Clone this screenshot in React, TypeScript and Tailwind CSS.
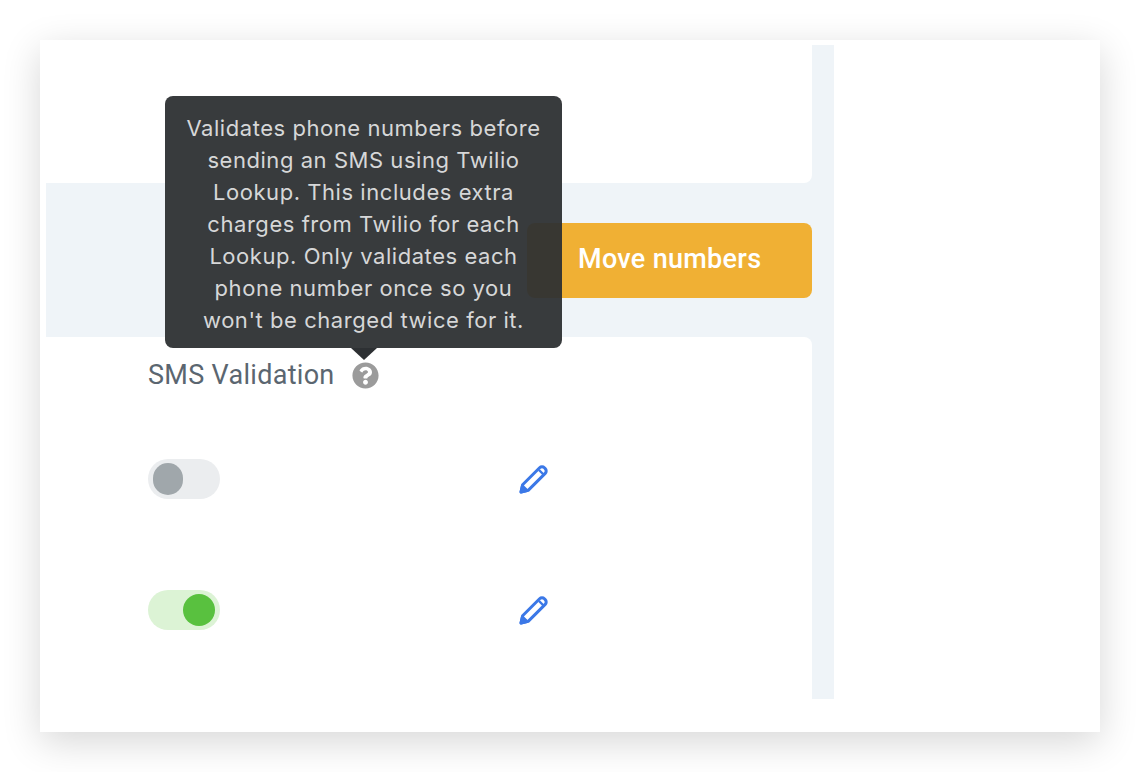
import { FaQuestionCircle } from 'react-icons/fa';

const tooltipLines = [
    'Validates phone numbers before',
    'sending an SMS using Twilio',
    'Lookup. This includes extra',
    'charges from Twilio for each',
    'Lookup. Only validates each',
    'phone number once so you',
    "won't be charged twice for it.",
];

function PencilIcon() {
    return (
        <svg width="30" height="30" viewBox="0 0 30 30" fill="none" stroke="#3b78e7" strokeWidth="3" strokeLinejoin="round">
            <path d="M2 28l1.6-7.2L20.6 3.8a3.4 3.4 0 0 1 4.8 0l.8.8a3.4 3.4 0 0 1 0 4.8L9.2 26.4z" />
            <path d="M20 6l4.5 4.5" strokeWidth="2.4" />
            <path d="M2 28l1.4-6 4.6 4.6z" fill="#3b78e7" />
        </svg>
    );
}

function Toggle({ on }: { on: boolean }) {
    return (
        <div className={on ? 'w-[72px] h-10 rounded-full bg-[#dcf3d5] flex items-center justify-end pr-[5px]' : 'w-[72px] h-10 rounded-full bg-[#ebedef] flex items-center pl-[5px]'}>
            <div className={on ? 'w-8 h-8 rounded-full bg-[#59c13f]' : 'w-[30px] h-8 rounded-full bg-[#a0a7ab]'} />
        </div>
    );
}

function Row({ on }: { on: boolean }) {
    return (
        <div className="h-[131px] flex items-start">
            <div className="w-[371px]">
                <Toggle on={on} />
            </div>
            <div className="pt-[5px]">
                <PencilIcon />
            </div>
        </div>
    );
}

export default function App() {
    return (
        <div className="h-[772px] overflow-hidden bg-white pt-10 px-10 font-['Roboto',sans-serif]">
            <div className="w-[1060px] h-[692px] bg-white pt-[5px] pl-[6px] shadow-[0_10px_36px_rgba(0,0,0,0.16)]">
                <div className="w-[788px] h-[654px] bg-[#eff4f8] pr-[22px] flex flex-col">
                    <div className="h-[138px] shrink-0 bg-white rounded-br-lg" />
                    <div className="h-[154px] shrink-0 flex items-center justify-end">
                        <div className="w-[285px] h-[75px] pl-[51px] pb-[2px] rounded-lg bg-[#f0b034] flex items-center text-white text-[27px] tracking-[0.3px] font-medium">
                            Move numbers
                        </div>
                    </div>
                    <div className="flex-1 min-h-0 bg-white rounded-tr-lg pl-[102px] pt-[22px]">
                        <div className="relative flex items-center h-[32px] mb-[68px] text-[27px] tracking-[0.3px] text-[#5b6670]">
                            <span>SMS Validation</span>
                            <FaQuestionCircle className="ml-[17px] text-[#9b9b9b]" size={27} />
                            <div className="absolute left-[17px] bottom-[43px] w-[397px] h-[252px] rounded-lg bg-[#2d3033]/95 flex flex-col items-center justify-center pt-[4px] text-[#d6d7d8] text-[22px] leading-[32px] tracking-[0.55px] font-['Inter',sans-serif]">
                                {tooltipLines.map((line) => (
                                    <div key={line} className="whitespace-nowrap">{line}</div>
                                ))}
                                <div className="absolute left-[186px] top-full w-0 h-0 border-x-[13px] border-x-transparent border-t-[12px] border-t-[#2d3033]" />
                            </div>
                        </div>
                        <Row on={false} />
                        <Row on={true} />
                    </div>
                </div>
            </div>
        </div>
    );
}
